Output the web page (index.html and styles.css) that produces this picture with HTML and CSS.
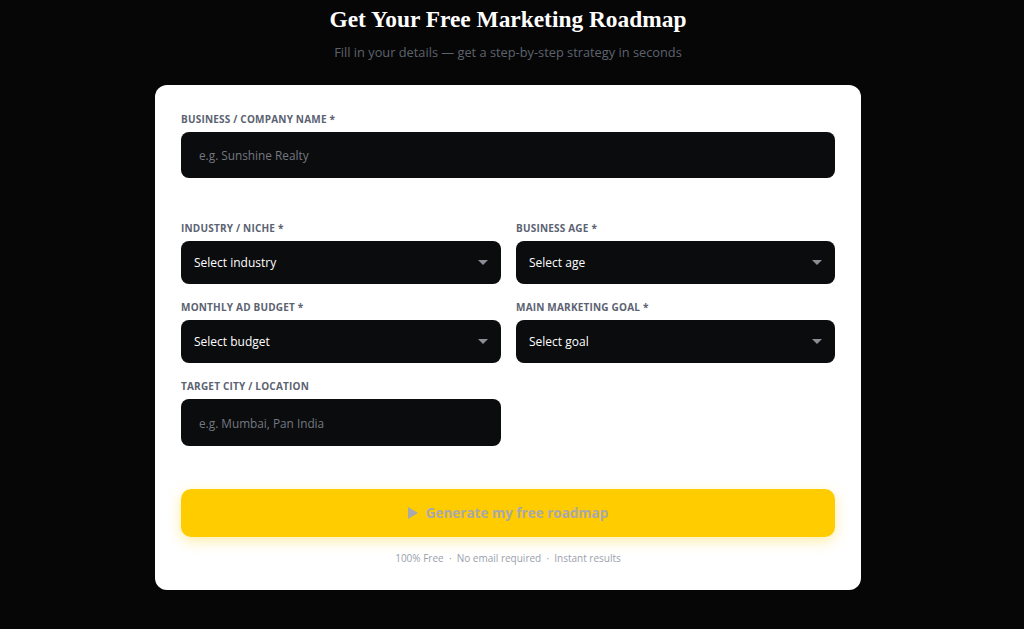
FILE: index.html
```html
<!DOCTYPE html>
<html>
<head>
<meta charset="utf-8">
<link rel="stylesheet" href="styles.css">
</head>
<body>
<div class="page">
  <h1 class="title">Get Your Free Marketing Roadmap</h1>
  <p class="subtitle">Fill in your details — get a step-by-step strategy in seconds</p>
  <div class="card">
    <div class="field full">
      <label class="label">BUSINESS / COMPANY NAME *</label>
      <div class="input first placeholder">e.g. Sunshine Realty</div>
    </div>
    <div class="grid">
      <div class="field">
        <label class="label">INDUSTRY / NICHE *</label>
        <div class="select"><span>Select industry</span><span class="caret"></span></div>
      </div>
      <div class="field">
        <label class="label">BUSINESS AGE *</label>
        <div class="select"><span>Select age</span><span class="caret"></span></div>
      </div>
      <div class="field">
        <label class="label">MONTHLY AD BUDGET *</label>
        <div class="select"><span>Select budget</span><span class="caret"></span></div>
      </div>
      <div class="field">
        <label class="label">MAIN MARKETING GOAL *</label>
        <div class="select"><span>Select goal</span><span class="caret"></span></div>
      </div>
      <div class="field">
        <label class="label">TARGET CITY / LOCATION</label>
        <div class="input placeholder">e.g. Mumbai, Pan India</div>
      </div>
    </div>
    <button class="cta"><span class="play"></span>Generate my free roadmap</button>
    <p class="footnote">100% Free &nbsp;·&nbsp; No email required &nbsp;·&nbsp; Instant results</p>
  </div>
</div>
</body>
</html>
```
FILE: styles.css
```css
* { box-sizing: border-box; }
html, body { margin: 0; padding: 0; }
body {
  background: #060607;
  font-family: "Open Sans", "Noto Sans", sans-serif;
  height: 629px;
  overflow: hidden;
  padding-right: 8px;
}
.page {
  width: 706px;
  margin: 0 auto;
  padding-top: 5px;
}
.title {
  margin: 0;
  text-align: center;
  font-family: "Liberation Serif", "DejaVu Serif", serif;
  font-weight: 700;
  font-size: 23.4px;
  line-height: 29px;
  color: #ffffff;
}
.subtitle {
  margin: 8px 0 0;
  text-align: center;
  font-size: 12.8px;
  line-height: 20px;
  color: #5d636d;
}
.card {
  margin-top: 23px;
  background: #ffffff;
  border-radius: 12px;
  padding: 27px 26px 24px;
  height: 505px;
}
.field { display: flex; flex-direction: column; }
.label {
  font-size: 10px;
  font-weight: 700;
  letter-spacing: 0.2px;
  color: #5b6272;
  line-height: 14px;
  margin-bottom: 6px;
}
.full { margin-bottom: 43px; }
.input {
  height: 47px;
  background: #0b0c0e;
  border-radius: 8px;
  padding: 0 18px;
  display: flex;
  align-items: center;
  font-size: 11.8px;
  color: #747880;
}
.input.first { height: 46px; }
.select {
  height: 43px;
  background: #0b0c0e;
  border-radius: 8px;
  padding: 0 12px 0 13px;
  display: flex;
  align-items: center;
  justify-content: space-between;
  font-size: 12px;
  color: #ffffff;
}
.caret {
  width: 0; height: 0;
  border-left: 5px solid transparent;
  border-right: 5px solid transparent;
  border-top: 5px solid #8a8d93;
  margin-right: 1px;
}
.grid {
  display: grid;
  grid-template-columns: 320px 319px;
  column-gap: 15px;
  row-gap: 16px;
}
.cta {
  margin-top: 43px;
  width: 100%;
  height: 48px;
  border: 0;
  border-radius: 10px;
  background: #ffcc00;
  box-shadow: 0 4px 14px rgba(255, 204, 0, 0.35);
  color: #a9a8ad;
  font-family: "Open Sans", "Noto Sans", sans-serif;
  font-weight: 700;
  font-size: 13.5px;
  display: flex;
  align-items: center;
  justify-content: center;
  gap: 8px;
}
.play {
  width: 0; height: 0;
  border-top: 6px solid transparent;
  border-bottom: 6px solid transparent;
  border-left: 10px solid #a9a8ad;
}
.footnote {
  margin: 14px 0 0;
  text-align: center;
  font-size: 10px;
  color: #9a9fab;
  line-height: 14px;
}
```
